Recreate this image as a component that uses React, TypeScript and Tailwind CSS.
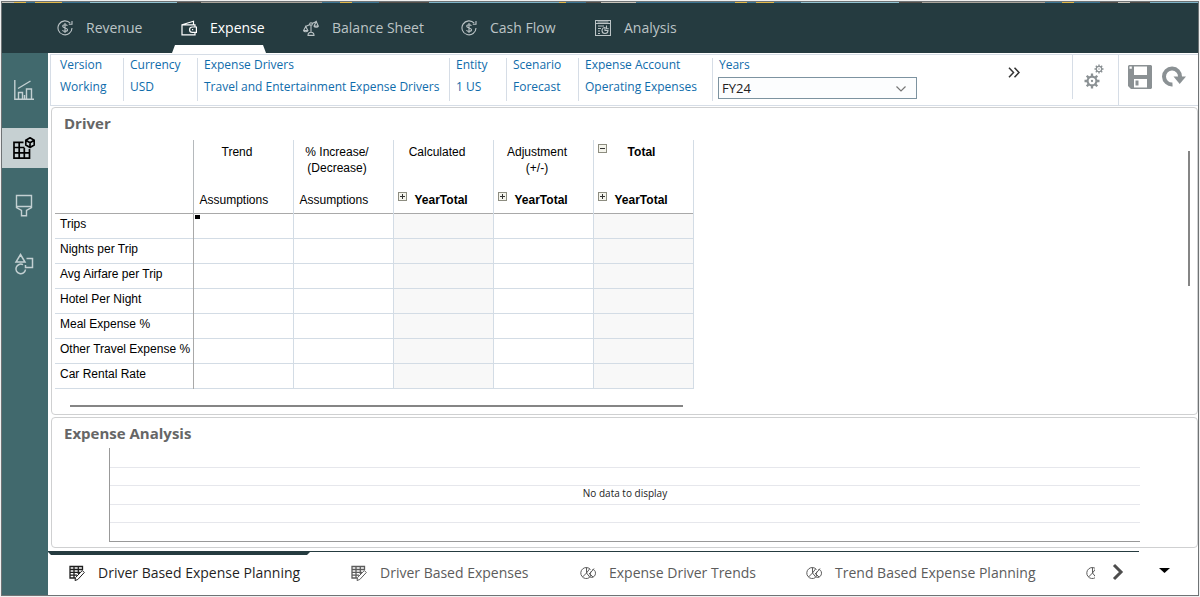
import type { ReactNode } from 'react';

interface IconProps {
  className?: string;
}

interface Tab {
  label: string;
  icon: ReactNode;
  width: string;
  active?: boolean;
}

function DollarCycleIcon({ className = 'h-4 w-4' }: IconProps) {
  return (
    <svg viewBox="0 0 16 16" fill="none" stroke="currentColor" strokeWidth="1.1" className={className} aria-hidden="true">
      <path d="M13.200 3.200A7 7 0 1 0 15 8M15 1v3.200h-3.200" />
      <path d="M10.400 5.800C10 5 9 4.700 8 4.700c-1.400 0-2.300.6-2.300 1.600 0 2.200 4.800 1.100 4.800 3.400 0 1.100-1 1.700-2.500 1.700-1.200 0-2.200-.4-2.500-1.300M8 3v10" />
    </svg>
  );
}

function WalletIcon({ className = 'h-4 w-4' }: IconProps) {
  return (
    <svg viewBox="0 0 16 16" fill="none" stroke="currentColor" strokeWidth="1.2" className={className} aria-hidden="true">
      <path d="M14 7V4.800H1v10h13v-2.300M1 4.800l11.500-3.500v3.300" />
      <path d="M15.400 7h-4.100a2.700 2.700 0 0 0 0 5.400h4.100z" />
      <path d="M11 9.700h1.200" />
    </svg>
  );
}

function ScaleIcon({ className = 'h-4 w-4' }: IconProps) {
  return (
    <svg viewBox="0 0 16 16" fill="none" stroke="currentColor" strokeWidth="1.1" className={className} aria-hidden="true">
      <path d="M2.500 6.500 7 4.500M9 3.500l4.500-2M8 5.500V12M5 15.400c0-2 1-3.200 3-3.200s3 1.200 3 3.200z" />
      <circle cx="8" cy="4" r="1.300" />
      <path d="M2.700 6.500.6 10.500h4.200zM.6 10.500c.4 1.700 3.800 1.700 4.200 0M13.200 1.500l-2.100 4.500h4.200zM11.100 6c.4 1.700 3.800 1.700 4.200 0" />
    </svg>
  );
}

function ReportIcon({ className = 'h-4 w-4' }: IconProps) {
  return (
    <svg viewBox="0 0 16 16" fill="none" stroke="currentColor" strokeWidth="1.1" className={className} aria-hidden="true">
      <path d="M.5.5h15v15H.500zM.5 3.500h15M2.500 2h11M3 6h6M3 8.500h3M3 11h2M3 13.500h2" />
      <path d="M10 7.500a3 3 0 1 0 3 3h-3zM11.500 5.500v3.300h2.300" />
    </svg>
  );
}

function ChartIcon() {
  return (
    <svg viewBox="0 0 20 20" fill="none" stroke="currentColor" strokeWidth="1.4" className="h-5 w-5" aria-hidden="true">
      <path d="M.8 0v19.200H20M4.500 19v-6.500h4V19M12.500 19V9h5v10M10.500 19v-4M4 8.500 16.500 1" />
    </svg>
  );
}

function GridCubeIcon() {
  return (
    <svg viewBox="0 0 22 22" fill="none" stroke="currentColor" strokeWidth="1.700" className="h-[22px] w-[22px]" aria-hidden="true">
      <path d="M10.500 5.300H1v15.900h15.500V12M1 10.500h10.500M1 15.800h15.500M6.200 5.300v15.900M11.300 11v10" />
      <path d="m17 .8 4.200 2.400v4.900L17 10.500l-4.200-2.400V3.200zM12.800 3.200 17 5.700l4.200-2.500M17 5.700v4.800" />
    </svg>
  );
}

function BrushIcon() {
  return (
    <svg viewBox="0 0 20 24" fill="none" stroke="currentColor" strokeWidth="1.400" className="h-6 w-5" aria-hidden="true">
      <path d="M2.500 1.500h15v12l-5 3v5.200h-5v-5.200l-5-3zM2.500 12.500h15" />
    </svg>
  );
}

function ShapesIcon() {
  return (
    <svg viewBox="0 0 20 22" fill="none" stroke="currentColor" strokeWidth="1.500" className="h-[22px] w-5" aria-hidden="true">
      <path d="M6.500 1.500 11 9H2zM12.500 5.500h6v9h-7V12" />
      <path d="M9 11.700a4.800 4.800 0 1 0 2.500 4.800" />
    </svg>
  );
}

function GearShape({ x, y, s }: { x: number; y: number; s: number }) {
  return (
    <g transform={`translate(${x} ${y}) scale(${s})`} stroke="currentColor" fill="none">
      <circle r="4.600" strokeWidth="2.200" />
      <circle r="1.200" fill="currentColor" stroke="none" />
      <path
        strokeWidth="2.400"
        d="M0-5v-2.800M0 5v2.800M-5 0h-2.800M5 0h2.800M3.500-3.500l2-2M-3.500-3.500l-2-2M3.500 3.500l2 2M-3.500 3.500l-2 2"
      />
    </g>
  );
}

function GearsIcon() {
  return (
    <svg viewBox="0 0 20 26" className="h-[26px] w-5" aria-hidden="true">
      <GearShape x={8} y={17} s={0.96} />
      <GearShape x={15} y={5} s={0.58} />
    </svg>
  );
}

function SaveIcon() {
  return (
    <svg viewBox="0 0 24 24" className="h-6 w-6" aria-hidden="true">
      <path
        fill="currentColor"
        fillRule="evenodd"
        d="M1 0h22l1 1v22l-1 1H3l-3-3V1zM6 1.500V10h13V1.500zM6 14v8.500h13V14zM1.500 1.500v2.300h2.300V1.500z"
      />
      <path fill="currentColor" d="M7.500 15.500h3v5h-3z" />
    </svg>
  );
}

function RefreshIcon() {
  return (
    <svg viewBox="0 0 24 24" className="h-6 w-6" aria-hidden="true">
      <path d="M10.500 19.500A8 8 0 1 1 18 12" fill="none" stroke="currentColor" strokeWidth="4" />
      <path d="M11.500 11.500H24L17.700 19z" fill="currentColor" />
    </svg>
  );
}

function FormIcon() {
  return (
    <svg viewBox="0 0 16 16" fill="none" stroke="currentColor" className="h-4 w-4 shrink-0" aria-hidden="true">
      <path d="M13.500 5V1.500H1v11.500h5M1 4.500h12.500M1 7.300h10M1 10.200h7M5 1.500V13M9.300 1.500V9M1 1.500h12.500" strokeWidth="1.300" />
      <path d="m13.300 5.500 2 2-6.500 7-2.800 1 .6-3z" />
    </svg>
  );
}

function TrendIcon() {
  return (
    <svg viewBox="0 0 16 14" fill="none" stroke="currentColor" className="h-[14px] w-4 shrink-0" aria-hidden="true">
      <path d="M10.500 3.500A5.500 5.500 0 1 0 9.500 11.500M6.500 1.500V7l-4 4M6.500 7l4 5M6.500 7l3-4" />
      <path d="M12.500 3.500c1.800 0 3 1.600 3 3.700 0 2.500-2 4.300-4 4.300-1.500-1.500-2-4-.5-6M9 7l4 4M14 2.500 9.500 8" />
    </svg>
  );
}

// decorative strip above the header, [width, colour]
const stripe: [number, string][] = [
  [12, '#c9c4bb'], [12, '#e3b94a'], [9, '#3f7896'], [27, '#e3b94a'], [28, '#3f7896'],
  [87, '#93c3d2'], [24, '#55504b'], [122, '#aaa49b'], [18, '#3f7896'], [12, '#e3b94a'],
  [27, '#3f7896'], [50, '#55504b'], [130, '#7fb4c8'], [7, '#e3b94a'], [20, '#3f7896'],
  [15, '#55504b'], [35, '#c9c4bb'], [99, '#3f7896'], [12, '#e3b94a'], [9, '#3f7896'],
  [18, '#e3b94a'], [27, '#3f7896'], [98, '#93c3d2'], [24, '#55504b'], [123, '#aaa49b'],
  [17, '#3f7896'], [12, '#e3b94a'], [26, '#3f7896'], [18, '#55504b'], [12, '#c9c4bb'],
  [20, '#55504b'], [48, '#7fb4c8'],
];

const modules: Tab[] = [
  { label: 'Revenue', icon: <DollarCycleIcon />, width: 'w-[124px]' },
  { label: 'Expense', icon: <WalletIcon />, width: 'w-[122px]', active: true },
  { label: 'Balance Sheet', icon: <ScaleIcon />, width: 'w-[158px]' },
  { label: 'Cash Flow', icon: <DollarCycleIcon />, width: 'w-[134px]' },
  { label: 'Analysis', icon: <ReportIcon />, width: 'w-[120px]' },
];

const povItems = [
  { label: 'Version', value: 'Working', width: 'w-[73px] pl-[9px]' },
  { label: 'Currency', value: 'USD', width: 'w-[74px] pl-[6px]' },
  { label: 'Expense Drivers', value: 'Travel and Entertainment Expense Drivers', width: 'w-[252px] pl-[6px]' },
  { label: 'Entity', value: '1 US', width: 'w-[57px] pl-[6px]' },
  { label: 'Scenario', value: 'Forecast', width: 'w-[72px] pl-[6px]' },
  { label: 'Expense Account', value: 'Operating Expenses', width: 'w-[134px] pl-[6px]' },
];

const columns = [
  { title: ['Trend'], member: 'Assumptions' },
  { title: ['% Increase/', '(Decrease)'], member: 'Assumptions' },
  { title: ['Calculated'], member: 'YearTotal', readOnly: true },
  { title: ['Adjustment', '(+/-)'], member: 'YearTotal' },
  { title: ['Total'], member: 'YearTotal', readOnly: true, expanded: true },
];

const rows = [
  'Trips',
  'Nights per Trip',
  'Avg Airfare per Trip',
  'Hotel Per Night',
  'Meal Expense %',
  'Other Travel Expense %',
  'Car Rental Rate',
];

const sheets: Tab[] = [
  { label: 'Driver Based Expense Planning', icon: <FormIcon />, width: 'w-[282px]', active: true },
  { label: 'Driver Based Expenses', icon: <FormIcon />, width: 'w-[229px]' },
  { label: 'Expense Driver Trends', icon: <TrendIcon />, width: 'w-[226px]' },
  { label: 'Trend Based Expense Planning', icon: <TrendIcon />, width: 'w-[280px]' },
];

function ToggleBox({ open = false, label }: { open?: boolean; label: string }) {
  return (
    <button
      aria-label={label}
      className="flex h-[9px] w-[9px] shrink-0 items-center justify-center border border-[#8d8d80] bg-[#f4f4ec]"
    >
      <svg viewBox="0 0 5 5" className="h-[5px] w-[5px]" aria-hidden="true">
        <path d={open ? 'M0 2.500h5' : 'M0 2.500h5M2.500 0v5'} stroke="#333" fill="none" />
      </svg>
    </button>
  );
}

function Header() {
  return (
    <nav className="flex h-[50px] bg-[#253b40] pl-[55px]">
      {modules.map((tab) => (
        <button
          key={tab.label}
          className={`relative flex h-full shrink-0 items-center gap-[13px] text-left text-sm ${tab.width} ${
            tab.active ? 'text-white' : 'text-[#bcc4c6]'
          }`}
        >
          {tab.icon}
          <span className="whitespace-nowrap">{tab.label}</span>
          {tab.active && (
            <span className="absolute bottom-0 -left-[9px] h-2 w-[94px] bg-white [clip-path:polygon(3px_0,91px_0,100%_100%,0_100%)]" />
          )}
        </button>
      ))}
    </nav>
  );
}

function Sidebar() {
  return (
    <aside className="flex w-[46px] shrink-0 flex-col bg-[#41696d] pt-[17px] text-[#c3d0d2]">
      <button aria-label="Dashboards" className="flex h-[58px] items-start justify-center pt-[10px] pr-[2px]">
        <ChartIcon />
      </button>
      <button aria-label="Forms" className="flex h-10 items-center justify-center bg-[#c6d0d2] pr-[2px] text-black">
        <GridCubeIcon />
      </button>
      <button aria-label="Format" className="flex h-[76px] items-center justify-center pr-[2px]">
        <BrushIcon />
      </button>
      <button aria-label="Shapes" className="flex h-10 items-center justify-center pr-[2px]">
        <ShapesIcon />
      </button>
    </aside>
  );
}

function PovBar() {
  return (
    <div className="flex h-[52px] border border-r-0 border-[#d6dde6] text-xs text-[#0f6cab]">
      <div className="flex min-w-0 flex-1 items-start pt-[3px]">
        {povItems.map((item) => (
          <dl
            key={item.label}
            className={`flex h-[43px] shrink-0 flex-col gap-2 border-r border-[#d6dde6] leading-[14px] whitespace-nowrap ${item.width}`}
          >
            <dt>{item.label}</dt>
            <dd>
              <a href="#member">{item.value}</a>
            </dd>
          </dl>
        ))}
        <div className="relative flex w-[204px] shrink-0 flex-col gap-[5px] pl-[5px] leading-[14px]">
          <label htmlFor="years" className="pl-px">
            Years
          </label>
          <select
            id="years"
            className="h-[22px] w-full appearance-none border border-[#7d93a0] bg-[#fcfdfe] px-[3px] text-[13px] leading-[18px] text-[#222]"
          >
            <option>FY24</option>
          </select>
          <svg
            viewBox="0 0 10 6"
            fill="none"
            stroke="#777"
            className="pointer-events-none absolute right-[11px] bottom-[7px] h-[6px] w-[10px]"
            aria-hidden="true"
          >
            <path d="m.5.5 4.500 4.500L9.500.5" strokeWidth="1.200" />
          </svg>
        </div>
      </div>
      <button aria-label="More dimensions" className="mt-3 mr-[52px] h-[11px] w-3 text-[#333]">
        <svg viewBox="0 0 12 11" fill="none" stroke="currentColor" strokeWidth="1.500" className="h-[11px] w-3" aria-hidden="true">
          <path d="m1 .8 4.500 4.700L1 10.200M6.500.8 11 5.500l-4.500 4.700" />
        </svg>
      </button>
      <div className="flex h-11 border-l border-[#d6dde6] text-[#8b9194]">
        <button aria-label="Actions" className="flex w-[45px] items-start justify-center pt-[9px] pr-[3px]">
          <GearsIcon />
        </button>
      </div>
      <div className="flex w-20 items-start gap-[10px] border-l border-[#d6dde6] pt-[10px] pl-[9px] text-[#8b9194]">
        <button aria-label="Save">
          <SaveIcon />
        </button>
        <button aria-label="Refresh">
          <RefreshIcon />
        </button>
      </div>
    </div>
  );
}

function DriverGrid() {
  return (
    <table className="w-[638px] table-fixed border-collapse font-['Liberation_Sans',Arial,sans-serif] text-xs text-black">
      <colgroup>
        <col className="w-[138px]" />
        {columns.map((col) => (
          <col key={col.title[0]} className="w-[100px]" />
        ))}
      </colgroup>
      <thead>
        <tr className="h-[73px] border-b border-[#a9a9a9]">
          <td className="border-r border-[#b5b9bc]" />
          {columns.map((col) => {
            const total = col.member === 'YearTotal';
            return (
              <th key={col.title[0]} className="border-r border-[#d3dce5] p-0 align-top font-normal">
                <div className="flex h-12 items-start pt-1 pl-1 leading-4">
                  {col.expanded && <ToggleBox open label={`Collapse ${col.title[0]}`} />}
                  <span className={`flex-1 text-center ${col.expanded ? 'pr-4 font-bold' : 'pr-4'}`}>
                    {col.title.map((line) => (
                      <span key={line} className="block">
                        {line}
                      </span>
                    ))}
                  </span>
                </div>
                <div className={`flex h-6 items-start pt-1 leading-4 ${total ? 'gap-2 pl-1 font-bold' : 'pl-[6px]'}`}>
                  {total && <ToggleBox label={`Expand ${col.title[0]}`} />}
                  <span>{col.member}</span>
                </div>
              </th>
            );
          })}
        </tr>
      </thead>
      <tbody>
        {rows.map((row, r) => (
          <tr key={row} className="h-[25px] border-b border-[#d3dce5]">
            <th className="border-r border-[#a9a9a9] p-0 pb-1 pl-[5px] text-left font-normal whitespace-nowrap">{row}</th>
            {columns.map((col, c) => (
              <td
                key={col.title[0]}
                className={`border-r border-[#d3dce5] p-0 align-top ${col.readOnly ? 'bg-[#f8f8f8]' : ''}`}
              >
                {r === 0 && c === 0 && <div className="mt-px ml-px h-1 w-[5px] bg-black" />}
              </td>
            ))}
          </tr>
        ))}
      </tbody>
    </table>
  );
}

function DriverPanel() {
  return (
    <section className="flex h-[308px] shrink-0 flex-col rounded border border-[#cfd0d1] pl-[3px]">
      <h2 className="h-8 pt-[5px] pl-[9px] text-[15px] leading-5 font-bold text-[#666]">Driver</h2>
      <div className="flex flex-1 items-start justify-between">
        <DriverGrid />
        <div className="mt-[11px] mr-[7px] h-[135px] w-[2px] bg-[#858585]" />
      </div>
      <div className="mb-[7px] ml-[15px] h-[2px] w-[613px] bg-[#858585]" />
    </section>
  );
}

function AnalysisPanel() {
  return (
    <section className="mt-[2px] flex h-[131px] shrink-0 flex-col rounded border border-[#cfd0d1]">
      <h2 className="h-[30px] pt-[5px] pl-3 text-[15px] leading-5 font-bold text-[#666]">Expense Analysis</h2>
      <div className="relative mr-[57px] ml-[57px] flex h-[94px] flex-col border-b border-l border-[#999]">
        <div className="h-5 border-b border-[#e6e7ec]" />
        <div className="h-[18px] border-b border-[#e6e7ec]" />
        <div className="h-[19px] border-b border-[#e6e7ec]" />
        <div className="h-[18px] border-b border-[#e6e7ec]" />
        <p className="absolute inset-x-0 top-0 flex h-[91px] items-center justify-center text-[10px] text-[#222]">
          No data to display
        </p>
      </div>
    </section>
  );
}

function SheetTabs() {
  return (
    <footer className="mt-[3px] flex flex-1 bg-white">
      <nav className="relative flex min-w-0 flex-1 items-start overflow-hidden border-t border-[#253b40]">
        <span className="absolute top-0 left-0 h-[3px] w-[262px] bg-[#253b40] [clip-path:polygon(0_0,100%_0,259px_100%,3px_100%)]" />
        {sheets.map((tab, i) => (
          <button
            key={tab.label}
            className={`flex h-[42px] shrink-0 items-center gap-[13px] text-left text-sm whitespace-nowrap ${tab.width} ${
              i === 0 ? 'ml-[21px]' : ''
            } ${tab.active ? 'text-[#1f1f1f]' : 'text-[#5c5c5c]'}`}
          >
            {tab.icon}
            {tab.label}
          </button>
        ))}
        <span className="flex h-[42px] w-[9px] shrink-0 items-center overflow-hidden text-[#5c5c5c]">
          <TrendIcon />
        </span>
        <button aria-label="Next tabs" className="mt-[11px] ml-[17px] h-[18px] w-3 shrink-0 text-[#4d4d4d]">
          <svg viewBox="0 0 12 18" fill="none" stroke="currentColor" strokeWidth="3" className="h-[18px] w-3" aria-hidden="true">
            <path d="m2 2 7 7-7 7" />
          </svg>
        </button>
      </nav>
      <button aria-label="All tabs" className="flex w-[59px] items-start justify-start pt-[17px] pl-5">
        <svg viewBox="0 0 11 5" className="h-[5px] w-[11px]" aria-hidden="true">
          <path d="M0 0h11L5.500 5z" />
        </svg>
      </button>
    </footer>
  );
}

export default function App() {
  return (
    <div className="flex min-h-screen bg-[#f0f0f0] p-px font-['Open_Sans','Noto_Sans',sans-serif]">
      <div className="flex min-w-0 flex-1 flex-col border border-[#6f7375] bg-white">
        <div className="flex h-px">
          {stripe.map(([width, color], i) => (
            <span key={i} style={{ flexGrow: width, backgroundColor: color }} />
          ))}
        </div>
        <Header />
        <div className="flex flex-1">
          <Sidebar />
          <div className="flex min-w-0 flex-1 flex-col">
            <main className="flex flex-col pt-px pl-[2px]">
              <PovBar />
              <div className="flex flex-col pt-px pl-px">
                <DriverPanel />
                <AnalysisPanel />
              </div>
            </main>
            <SheetTabs />
          </div>
        </div>
      </div>
    </div>
  );
}
